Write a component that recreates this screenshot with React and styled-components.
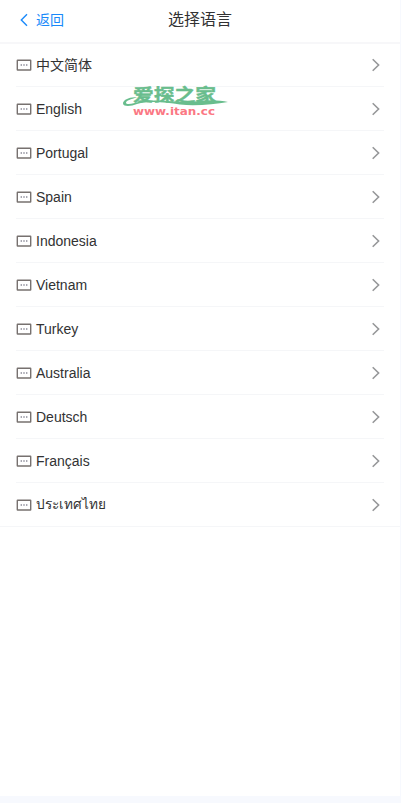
import styled, { createGlobalStyle } from 'styled-components'

const languages = [
  { name: '中文简体' },
  { name: 'English' },
  { name: 'Portugal' },
  { name: 'Spain' },
  { name: 'Indonesia' },
  { name: 'Vietnam' },
  { name: 'Turkey' },
  { name: 'Australia' },
  { name: 'Deutsch' },
  { name: 'Français' },
  { name: 'ประเทศไทย', size: '13.6px', weight: 500 },
]

function MessageIcon() {
  return (
    <IconBox width="16" height="16" viewBox="0 0 16 16">
      <rect x="1.3" y="3.2" width="13.4" height="9.8" rx="0.3" fill="none" stroke="#77716f" strokeWidth="1.4" />
      <path d="M4.6 8h1.4M7.3 8h1.4M10 8h1.4" stroke="#8b8b98" strokeWidth="1.3" />
    </IconBox>
  )
}

function Watermark() {
  return (
    <Logo width="108" height="44" viewBox="0 -6 108 44">
      <text x="11" y="16.4" textLength="83" lengthAdjust="spacingAndGlyphs" fontSize="16.5" fontWeight="700" fill="#69bd8d" stroke="#69bd8d" strokeWidth="0.4">爱探之家</text>
      <path d="M15 12.5C8 11.5 1 15 1 18.5C1.5 22 9 21.5 15 19C28 15.5 44 17.5 58 19.5C74 21.5 92 19 106 17C99 15.5 89 14.5 78 16C56 18 33 14 20 16C13 18 5 20.5 4 18C4 15.5 9 14 15 12.5Z" fill="#69bd8d" />
      <text x="11" y="30.3" textLength="82" lengthAdjust="spacingAndGlyphs" fontFamily="'DejaVu Sans', sans-serif" fontSize="10" fontWeight="700" fill="#fb7884">www.itan.cc</text>
    </Logo>
  )
}

function App() {
  return (
    <Page>
      <GlobalStyle />
      <NavBar>
        <BackButton>
          <svg width="16" height="16" viewBox="0 0 16 16">
            <path d="M11 2.3L5.3 8L11 13.7" fill="none" stroke="#1989fa" strokeWidth="1.4" />
          </svg>
          返回
        </BackButton>
        <Title>选择语言</Title>
      </NavBar>
      <List>
        {languages.map(({ name, size, weight }) => (
          <Cell key={name}>
            <MessageIcon />
            <CellTitle $size={size} $weight={weight}>{name}</CellTitle>
            <svg width="16" height="16" viewBox="0 0 16 16">
              <path d="M4.7 2.2L10.6 8L4.7 13.8" fill="none" stroke="#969799" strokeWidth="1.6" />
            </svg>
          </Cell>
        ))}
      </List>
      <Watermark />
    </Page>
  )
}

const GlobalStyle = createGlobalStyle`
  body {
    margin: 0;
    background: #f7f9fe;
    font-family: 'Liberation Sans', 'Noto Sans CJK SC', sans-serif;
    overflow: hidden;
  }

  * {
    box-sizing: border-box;
  }
`

const Page = styled.main`
  position: relative;
  width: 400px;
  height: 796px;
  background: #fff;
`

const NavBar = styled.header`
  display: grid;
  grid-template-columns: 1fr auto 1fr;
  align-items: center;
  height: 44px;
  padding: 0 16px 2px;
  border-bottom: 2px solid #f7f7f9;
`

const BackButton = styled.button`
  display: flex;
  align-items: center;
  gap: 4px;
  padding: 0;
  border: 0;
  background: none;
  color: #1989fa;
  font: inherit;
  font-size: 14px;
  line-height: 20px;
`

const Title = styled.h1`
  margin: 0;
  color: #323233;
  font-size: 16px;
  font-weight: 400;
  line-height: 22px;
`

const List = styled.ul`
  margin: 0;
  padding: 0;
  list-style: none;
  border-bottom: 1px solid #f5f6f8;
`

const Cell = styled.li`
  display: flex;
  align-items: center;
  height: 44px;
  margin: 0 16px;
  border-bottom: 1px solid #f5f6f8;

  &:first-child {
    height: 43px;
  }

  &:last-child {
    height: 43px;
    border-bottom: 0;
  }
`

const CellTitle = styled.span`
  flex: 1;
  margin-left: 4px;
  color: #323233;
  font-size: ${({ $size }) => $size || '14px'};
  font-weight: ${({ $weight }) => $weight || 400};
  line-height: 24px;
`

const IconBox = styled.svg`
  flex: none;
`

const Logo = styled.svg`
  position: absolute;
  left: 122px;
  top: 79px;
  font-family: 'Noto Sans CJK SC', sans-serif;
`

export default App
